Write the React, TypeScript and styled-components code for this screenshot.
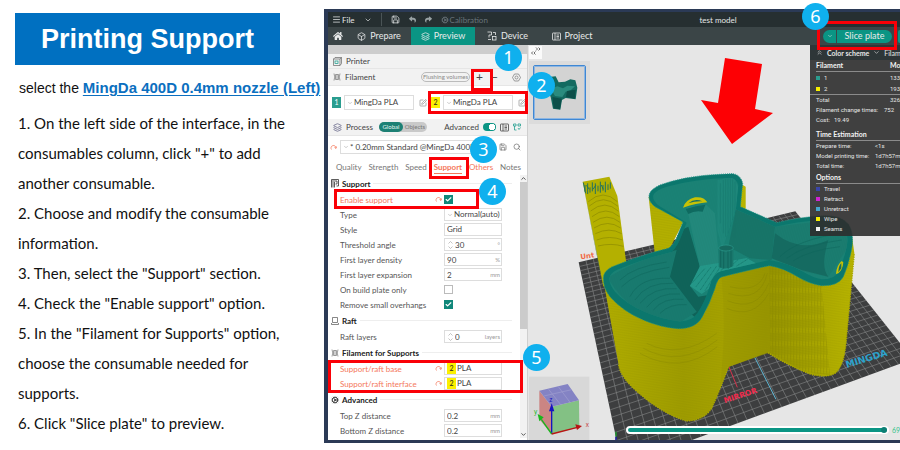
import React from "react";
import styled, { createGlobalStyle, css } from "styled-components";
import {
  Box,
  Check,
  ChevronDown,
  ChevronUp,
  ChevronsUp,
  Cog,
  Layers,
  Menu,
  Save,
  Search,
  SquarePen,
} from "lucide-react";
import { FaHome, FaReply, FaShare } from "react-icons/fa";

const teal = "#0a9584";
const orange = "#f4785c";
const ui = `Lato, Roboto, "Liberation Sans", sans-serif`;

const GlobalStyle = createGlobalStyle`
  * { box-sizing: border-box; }
  body { margin: 0; background: #fff; overflow: hidden; }
  button, input, select { font: inherit; color: inherit; margin: 0; padding: 0; border: 0; background: none; }
  svg { flex: none; }
`;

const Page = styled.main`
  display: flex;
  align-items: flex-start;
  min-height: 100vh;
`;

/* ---------- written guide ---------- */

const Guide = styled.section`
  flex: 0 0 36%;
  padding: 13px 0 0 18px;
  color: #111;
`;

const Banner = styled.h1`
  margin: 0 44px 8px -3px;
  background: #0070c1;
  color: #fff;
  font: bold 27px/52px "Liberation Sans", Arial, sans-serif;
  text-align: center;
  white-space: nowrap;
`;

const Lead = styled.p`
  margin: 0 0 5px 1px;
  font: 14px/30px "Liberation Sans", Arial, sans-serif;
  white-space: nowrap;
`;

const NozzleLink = styled.a`
  color: #0b6fc0;
  font-size: 15px;
  font-weight: bold;
  text-decoration: underline;
  text-underline-offset: 2px;
`;

const Step = styled.p`
  margin: 0;
  font: 15px/30px Lato, "Noto Sans", sans-serif;
  white-space: nowrap;
`;

/* ---------- application window ---------- */

const Window = styled.section`
  position: relative;
  flex: 1;
  min-width: 0;
  margin-top: 9px;
  border: 3px solid #2b3a56;
  border-left-width: 4px;
  border-right: 0;
  font: 8px/12px ${ui};
  color: #444;
`;

const TitleBar = styled.header`
  display: grid;
  grid-template-columns: 9fr auto 4fr;
  align-items: center;
  height: 15px;
  padding: 0 0 0 4px;
  background: #262f31;
  color: #e3e6e6;
`;

const TitleTools = styled.div`
  display: flex;
  align-items: center;
  gap: 9px;
`;

const ToolButton = styled.button<{ $muted?: boolean }>`
  display: flex;
  align-items: center;
  gap: 1px;
  color: ${(p) => (p.$muted ? "#69747a" : "inherit")};
`;

const Rule = styled.span`
  width: 1px;
  height: 13px;
  background: #4a5456;
`;

const NavBar = styled.nav`
  display: flex;
  align-items: center;
  height: 18px;
  background: #3b4547;
  color: #e8eaea;
`;

const NavTab = styled.button<{ $active?: boolean; $width: number }>`
  display: flex;
  align-items: center;
  justify-content: center;
  gap: 4px;
  width: ${(p) => p.$width}px;
  height: 18px;
  background: ${(p) => (p.$active ? teal : "transparent")};
  font-size: 9px;
`;

const SliceGroup = styled.div`
  display: flex;
  gap: 6px;
  margin-left: auto;
  overflow: hidden;
`;

const Pill = styled.div`
  display: flex;
  height: 13px;
  width: 69px;
  border-radius: 7px;
  background: ${teal};
`;

const PillPart = styled.button<{ $main?: boolean }>`
  display: flex;
  align-items: center;
  justify-content: center;
  flex: ${(p) => (p.$main ? "1" : "0 0 13px")};
  border-left: ${(p) => (p.$main ? "1px solid #3b4547" : "0")};
  font-size: 9px;
`;

const PillEdge = styled.div`
  width: 2px;
  height: 13px;
  border-radius: 2px 0 0 2px;
  background: ${teal};
`;

const Workspace = styled.div`
  display: flex;
  align-items: stretch;
`;

/* ---------- settings sidebar ---------- */

const Sidebar = styled.aside`
  flex: 0 0 200px;
  background: #fff;
  border-right: 1px solid #cfcfcf;
`;

const Strip = styled.div`
  height: 9px;
  background: #cdcdcd;
`;

const GroupHeader = styled.div<{ $tall?: boolean }>`
  display: flex;
  align-items: center;
  gap: 4px;
  height: ${(p) => (p.$tall ? 17 : 15)}px;
  padding: 0 6px 0 5px;
  background: #f2f2f2;
  border-bottom: 1px solid #e6e6e6;
`;

const Spacer = styled.span`
  flex: 1;
`;

const FlushButton = styled.button`
  height: 10px;
  width: 49px;
  border: 1px solid #bbb;
  border-radius: 5px;
  color: #8a8a8a;
  font-size: 6px;
  line-height: 8px;
  white-space: nowrap;
`;

const GlyphButton = styled.button<{ $gapAfter?: boolean }>`
  display: flex;
  flex: 0 0 11px;
  justify-content: center;
  margin-right: ${(p) => (p.$gapAfter ? 8 : 0)}px;
  font-size: 12px;
`;

const FilamentList = styled.div`
  display: grid;
  grid-template-columns: 1fr 1fr;
  column-gap: 3px;
  padding: 9px 0 9px 4px;
`;

const FilamentItem = styled.div`
  display: flex;
  align-items: center;
  gap: 3px;
`;

const Swatch = styled.span<{ $color: string; $dark?: boolean }>`
  flex: 0 0 9px;
  height: 11px;
  background: ${(p) => p.$color};
  color: ${(p) => (p.$dark ? "#222" : "#fff")};
  font-size: 7px;
  line-height: 11px;
  text-align: center;
`;

const Field = styled.div<{ $height?: number }>`
  display: flex;
  align-items: center;
  flex: 1;
  min-width: 0;
  gap: 1px;
  height: ${(p) => p.$height ?? 13}px;
  padding: 0 1px 0 2px;
  border: 1px solid #ddd;
  background: #fff;
`;

const Select = styled.select`
  appearance: none;
  flex: 1;
  min-width: 0;
  height: 11px;
  line-height: 11px;
`;

const TextBox = styled.input`
  flex: 1;
  width: 20px;
  min-width: 0;
  height: 11px;
`;

const Unit = styled.span`
  color: #999;
  font-size: 6px;
`;

const ScopeSwitch = styled.div`
  display: flex;
  margin-left: 2px;
  height: 10px;
  border-radius: 5px;
  background: #c9c9c9;
`;

const ScopeButton = styled.button<{ $active?: boolean }>`
  width: 24px;
  border-radius: 5px;
  font-size: 6px;
  line-height: 10px;
  background: ${(p) => (p.$active ? "#1d8074" : "transparent")};
  color: ${(p) => (p.$active ? "#e5f5f2" : "#777")};
`;

const Toggle = styled.input`
  appearance: none;
  width: 13px;
  height: 8px;
  border-radius: 4px;
  background: radial-gradient(circle at 9px 4px, #fff 3px, ${teal} 3px);
`;

const PresetRow = styled.div`
  display: flex;
  align-items: center;
  gap: 3px;
  padding: 4px 5px 3px 2px;
`;

const Tabs = styled.div`
  display: flex;
  justify-content: space-between;
  align-items: flex-end;
  height: 18px;
  padding: 0 6px 1px 8px;
`;

const Tab = styled.button<{ $state?: "active" | "changed" }>`
  height: 14px;
  border-bottom: 1px solid transparent;
  color: #777;
  ${(p) => p.$state && css`color: ${orange};`}
  ${(p) =>
    p.$state === "active" &&
    css`
      font-weight: bold;
      border-color: ${orange};
    `}
`;

const Settings = styled.div`
  display: flex;
  padding-bottom: 2px;
`;

const SettingsList = styled.div`
  flex: 1;
  min-width: 0;
`;

const ScrollTrack = styled.div`
  display: flex;
  flex-direction: column;
  align-items: center;
  flex: 0 0 7px;
  background: #f2f2f2;
`;

const ScrollThumb = styled.div`
  flex: 0 0 56%;
  width: 7px;
  background: #cbcbcb;
`;

const SectionTitle = styled.h2`
  display: flex;
  align-items: center;
  gap: 3px;
  height: 17px;
  margin: 0;
  padding: 0 8px 0 3px;
  color: #222;
  font-size: 8px;
  &::after {
    content: "";
    flex: 1;
    height: 1px;
    background: #eee;
  }
`;

const Row = styled.div<{ $changed?: boolean }>`
  display: grid;
  grid-template-columns: 95px 9px 58px;
  align-items: center;
  height: 15px;
  padding-left: 12px;
  white-space: nowrap;
  color: ${(p) => (p.$changed ? orange : "#555")};
`;

const Control = styled.div`
  display: flex;
  color: #444;
`;

const Tick = styled.span`
  position: relative;
  display: flex;
  width: 9px;
  height: 9px;
  color: #fff;
  svg {
    position: absolute;
    inset: 1px;
    pointer-events: none;
  }
`;

const TickInput = styled.input`
  appearance: none;
  width: 9px;
  height: 9px;
  border: 1px solid #bbb;
  &:checked {
    background: #10877a;
    border-color: #10877a;
  }
`;

/* ---------- preview viewport ---------- */

const Viewport = styled.div`
  position: relative;
  flex: 1;
  min-width: 0;
  overflow: hidden;
  background: #e6e6e6;
`;

const Scene = styled.svg`
  position: absolute;
  inset: 0;
  width: 100%;
  height: 100%;
`;

const CollapseButton = styled.button`
  position: absolute;
  left: 1px;
  top: 1px;
  width: 13px;
  height: 13px;
  background: #fafafa;
  color: #444;
`;

const PlateThumb = styled.div`
  position: absolute;
  left: 1px;
  top: 16px;
  padding: 4px;
  background: #dcdcdc;
`;

const PlateButton = styled.button`
  display: block;
  width: 53px;
  height: 55px;
  border: 1px solid #3f87d3;
  border-radius: 2px;
  outline: 1px solid #8db6e2;
  outline-offset: -2px;
  background: #d3d3d3;
`;

const Stats = styled.section`
  position: absolute;
  top: 0;
  right: 0;
  width: 90px;
  height: 191px;
  overflow: hidden;
  background: rgba(46, 46, 46, 0.9);
  color: #e6e6e6;
  font-size: 6px;
  line-height: 10px;
  white-space: nowrap;
`;

const StatsTabs = styled.div`
  display: flex;
  align-items: center;
  height: 15px;
  gap: 4px;
  padding-left: 6px;
  background: #2e3638;
  font-size: 7px;
`;

const StatsHead = styled.h3`
  display: grid;
  grid-template-columns: 74px auto;
  height: 12px;
  margin: 0 0 0 6px;
  border-bottom: 1px solid #8b8b8b;
  color: #f2f2f2;
  font-size: 7px;
  line-height: 10px;
`;

const StatsBlock = styled.div<{ $ruled?: boolean; $gap?: number }>`
  padding: 0 0 0 6px;
  margin-bottom: ${(p) => p.$gap ?? 0}px;
  font-family: Roboto, sans-serif;
  ${(p) => p.$ruled && css`border-bottom: 1px solid #8b8b8b;`}
`;

const StatsLine = styled.div<{ $cols?: string; $height?: number }>`
  display: grid;
  grid-template-columns: ${(p) => p.$cols ?? "8px 66px auto"};
  align-items: center;
  height: ${(p) => p.$height ?? 10}px;
`;

const Dot = styled.span<{ $color: string }>`
  width: 4px;
  height: 4px;
  background: ${(p) => p.$color};
`;

const LayerSlider = styled.div`
  position: absolute;
  left: 98px;
  right: 0;
  bottom: 5px;
  display: flex;
  align-items: center;
  gap: 3px;
  height: 10px;
  color: #34c38a;
  font-size: 7px;
`;

const Range = styled.input`
  appearance: none;
  flex: 1;
  min-width: 0;
  height: 8px;
  border: 2px solid #fff;
  border-radius: 4px;
  background: ${teal};
  &::-webkit-slider-thumb {
    appearance: none;
    width: 6px;
    height: 6px;
    border-radius: 50%;
    background: #0b7f74;
  }
`;

/* ---------- callouts drawn over the window ---------- */

const Frame = styled.div<{ $x: number; $y: number; $w: number; $h: number; $fromRight?: boolean }>`
  position: absolute;
  ${(p) => (p.$fromRight ? "right" : "left")}: ${(p) => p.$x}px;
  top: ${(p) => p.$y}px;
  width: ${(p) => p.$w}px;
  height: ${(p) => p.$h}px;
  border: 3px solid #fa0007;
  pointer-events: none;
`;

const Bubble = styled.span<{ $x: number; $y: number; $fromRight?: boolean }>`
  position: absolute;
  ${(p) => (p.$fromRight ? "right" : "left")}: ${(p) => p.$x}px;
  top: ${(p) => p.$y}px;
  width: 27px;
  height: 27px;
  border-radius: 50%;
  background: #0fb0ee;
  color: #fff;
  font: 18px/26px "Noto Sans", sans-serif;
  text-align: center;
`;

/* ---------- drawings ---------- */

type Pt = [number, number];

const corners: Pt[] = [
  [176, 397],
  [826, 244],
  [1178, 687],
  [306, 1007],
];

function project(u: number, v: number): Pt {
  const [[x0, y0], [x1, y1], [x2, y2], [x3, y3]] = corners;
  const dx1 = x1 - x2, dx2 = x3 - x2, sx = x0 - x1 + x2 - x3;
  const dy1 = y1 - y2, dy2 = y3 - y2, sy = y0 - y1 + y2 - y3;
  const det = dx1 * dy2 - dx2 * dy1;
  const g = (sx * dy2 - dx2 * sy) / det;
  const h = (dx1 * sy - sx * dy1) / det;
  const w = g * u + h * v + 1;
  return [
    ((x1 - x0 + g * x1) * u + (x3 - x0 + h * x3) * v + x0) / w,
    ((y1 - y0 + g * y1) * u + (y3 - y0 + h * y3) * v + y0) / w,
  ];
}

function gridPath() {
  const cells = 34;
  let d = "";
  for (let i = 1; i < cells; i++) {
    const t = i / cells;
    const lines: [Pt, Pt][] = [
      [project(t, 0), project(t, 1)],
      [project(0, t), project(1, t)],
    ];
    lines.forEach(([a, b]) => {
      d += `M${a.map((n) => n.toFixed(1)).join(" ")}L${b.map((n) => n.toFixed(1)).join(" ")}`;
    });
  }
  return d;
}

const wall =
  "M250 450L296 705Q300 735 335 770Q420 850 500 873Q550 872 575 835Q600 780 625 711L744 668Q800 705 870 732Q920 746 948 728Q972 705 978 640L1003 370L996 320L750 380L590 430Z";

const rim =
  "M250 445Q250 424 275 411Q360 376 445 355Q462 345 472 318L489 276L405 230Q383 213 388 193Q392 178 420 165Q500 137 600 133L638 131Q662 134 668 160L661 230L770 278Q830 263 900 258Q960 253 985 282Q1002 310 996 350Q988 400 970 440Q955 468 905 467Q870 463 830 439Q790 414 748 407Q690 420 605 441Q592 445 585 475Q570 520 547 560Q528 596 475 596Q420 592 370 570Q310 545 270 500Q250 475 250 445Z";

const cavity =
  "M268 445Q270 430 290 420Q370 386 455 366Q472 350 484 318L500 278L418 228Q396 212 400 195Q408 180 440 170Q520 147 630 143Q650 145 655 165L648 238L765 290Q840 274 900 270Q950 266 970 290Q988 315 980 350Q972 392 955 425Q945 448 905 448Q880 444 845 423Q800 398 748 390Q690 403 605 423Q580 428 570 465Q556 515 532 550Q515 576 475 574Q420 566 375 546Q315 520 285 485Q268 465 268 445Z";

function ModelScene() {
  return (
    <Scene viewBox="528 45 372 395" preserveAspectRatio="xMinYMin slice" aria-hidden="true">
      <defs>
        <pattern id="weave" width="6" height="5" patternUnits="userSpaceOnUse" patternTransform="rotate(-6)">
          <path d="M0 1H6M1 3H5" stroke="#7d7b00" strokeWidth="1.2" opacity="0.45" />
        </pattern>
        <pattern id="ribs" width="9" height="40" patternUnits="userSpaceOnUse">
          <path d="M2 0V40M6 8V34" stroke="#6f6f00" strokeWidth="1.5" opacity="0.5" />
        </pattern>
        <pattern id="threads" width="7" height="4" patternUnits="userSpaceOnUse" patternTransform="rotate(-16)">
          <path d="M0 2H6" stroke="#0c6a60" strokeWidth="1" opacity="0.4" />
        </pattern>
        <linearGradient id="wall" x1="0" x2="1" y1="0" y2="0">
          <stop offset="0" stopColor="#b5b100" />
          <stop offset="0.32" stopColor="#a19e00" />
          <stop offset="0.48" stopColor="#a9a500" />
          <stop offset="0.65" stopColor="#9c9900" />
          <stop offset="1" stopColor="#bdb900" />
        </linearGradient>
        <clipPath id="inside"><path d={cavity} /></clipPath>
      </defs>
      <g transform="translate(520 130) scale(0.33333)">
        <polygon points={corners.map((c) => c.join(",")).join(" ")} fill="#3d3e3f" />
        <path d={gridPath()} stroke="#8b8c8c" strokeWidth="1.7" fill="none" />
        <path d="M625 706L652 772" stroke="#d5324c" strokeWidth="3" />
        <path d="M704 682L768 808" stroke="#5db5d2" strokeWidth="3" />
        <text x="614" y="820" transform="rotate(-18 614 820)" fill="#f02a4c" fontFamily="DejaVu Sans" fontWeight="bold" fontSize="23">MIRROR</text>
        <text x="980" y="714" transform="rotate(-17 980 714)" fill="#2ba2cd" fontFamily="DejaVu Sans" fontWeight="bold" fontSize="28">MINGDA</text>
        <text x="182" y="388" transform="rotate(-8 182 388)" fill="#f16a45" fontFamily="DejaVu Sans" fontWeight="bold" fontSize="21">Unt</text>

        <path d="M188 155L268 140L292 198L319 400L250 470Z" fill="#b4b000" />
        <path d="M188 155L250 470L235 400Z" fill="#4f7b50" />
        <path d="M205 215Q250 175 292 215M208 228Q250 190 294 229M212 243Q255 207 296 244M216 260Q258 226 298 260M219 277Q262 246 300 277M222 294Q264 267 302 294M226 311Q268 290 305 311M230 330Q268 315 308 330M234 348Q274 338 310 349" stroke="#8b8900" strokeWidth="2" fill="none" />
        <path d="M195 165V185M203 160V192M210 172V188M217 157V184M226 160V192M234 167V184M241 155V188M249 165V182M256 155V187M264 163V180M271 157V176M190 158L197 190M199 166L208 178M219 178L228 165M244 165L250 178" stroke="#24725f" strokeWidth="3" />

        <path d="M386 200L404 367L450 354L491 274L440 225Z" fill="#b8b400" />
        <path d="M386 200L404 367L450 354L491 274L440 225Z" fill="url(#weave)" />
        <path d="M660 160L677 170V238L658 240Z" fill="#b8b400" />

        <path d={wall} fill="url(#wall)" />
        <path d={wall} fill="url(#weave)" />
        <path d="M748 407Q790 414 830 439Q870 463 905 467L930 735Q880 735 840 718L750 668Z" fill="url(#ribs)" />
        <path d="M748 407L750 668L625 711L600 770Q620 600 605 441Z" fill="#969300" opacity="0.35" />
        <path d="M630 470Q715 490 735 430M625 490Q720 520 742 430M622 512Q710 548 746 460M620 535Q700 570 746 490M380 640Q480 690 590 610M370 655Q480 715 592 630M360 670Q480 738 592 650" stroke="#7f7d00" strokeWidth="1.5" fill="none" opacity="0.6" />
        <path d="M296 705Q300 735 335 770Q420 850 500 873Q550 872 575 835Q600 780 625 711M744 668Q800 705 870 732Q920 746 948 728Q972 705 978 640L1003 370" fill="none" stroke="#aaa700" strokeWidth="4" strokeDasharray="4 3" />

        <path d={rim} fill="#0b776d" />
        <path d={rim} fill="none" stroke="#1a9285" strokeWidth="3" strokeDasharray="3 3" />
        <path d={cavity} fill="#1a8376" />
        <g clipPath="url(#inside)">
          <path d="M484 300L505 290L540 412L510 468L535 500L565 495L535 570L440 490L455 366Z" fill="#0f6258" />
          <path d="M268 440Q360 385 470 360L450 440L530 545L475 580Q330 560 268 450Z" fill="#187b6f" />
          <path d="M500 232L560 225L585 250L598 400L540 412Z" fill="#238a7d" />
          <path d="M592 150L640 140L655 170L648 238L606 360L592 300Z" fill="#1f897c" />
          <path d="M648 238L765 290L755 390L690 385L625 350Z" fill="#177568" />
          <path d="M765 290L980 265L985 350L925 440L845 423L755 385Z" fill="#1b7d70" />
          <path d="M765 310Q840 370 925 330Q900 410 925 440L845 420L755 385Z" fill="#156b61" />
          <path d="M510 468L540 408L600 398L680 384L712 402L605 425L575 470L545 492Z" fill="#259a8b" />
          <path d={cavity} fill="url(#threads)" />
          <path d="M330 500Q360 440 450 445M345 510Q380 455 460 460M360 520Q400 470 470 476M380 532Q415 486 480 492M400 540Q430 502 490 508M420 550Q450 520 500 524M300 450Q340 410 440 396M305 470Q350 425 448 412M780 380Q830 330 960 310M800 385Q850 345 965 330M820 392Q870 360 960 350" stroke="#0f655b" strokeWidth="1.5" fill="none" />
          <path d="M610 150V310M617 147V320M624 145V310M631 144V290M638 146V270M645 155V250M601 160V280" stroke="#10695f" strokeWidth="1.3" opacity="0.65" />
          <path d="M515 460L555 415M528 470L573 411M541 480L590 408M555 482L605 404M575 460L620 400M625 415L655 388M650 408L682 388" stroke="#0e695f" strokeWidth="2" strokeDasharray="3 2" />
        </g>
        <path d="M596 356V411Q618 422 640 408V352" fill="#19776c" />
        <ellipse cx="618" cy="354" rx="22" ry="9" fill="#16695f" stroke="#2b9a8d" strokeWidth="2" />
        <path d="M602 362V412M611 365V416M624 364V415M633 361V411" stroke="#0d5d54" strokeWidth="2" />
        <path d="M489 233Q497 209 525 202Q552 199 562 217Q530 220 489 233Z" fill="#c8c205" />
        <path d="M505 220Q524 204 547 214Q524 213 505 220Z" fill="#186e63" />
        <path d="M497 237Q528 226 556 224L548 245Q525 240 505 252Z" fill="#0f6a60" />
        <path d="M948 432Q950 405 965 393L970 397Q968 420 955 430Z" fill="#c8c205" />
        <path d="M955 427Q955 408 964 399V415Z" fill="#176b60" />

        <rect x="27" y="740" width="181" height="190" fill="#d8d8d8" />
        <path d="M58 782L95 830V912L58 868Z" fill="#cb8583" />
        <path d="M95 830L177 811L178 892L95 912Z" fill="#83c184" />
        <path d="M58 782L143 762L177 811L95 830Z" fill="#8483c4" />
        <path d="M72 798L155 779M86 778L122 824M115 770L150 817" stroke="#a09fd0" strokeWidth="2" />
        <path d="M95 912V838" stroke="#1714bf" strokeWidth="4" />
        <path d="M95 820L87 844H103Z" fill="#1714bf" />
        <path d="M95 912L64 868" stroke="#17b71c" strokeWidth="4" />
        <path d="M53 852L71 862L58 874Z" fill="#17b71c" />
        <path d="M95 912L172 892" stroke="#b91414" strokeWidth="4" />
        <path d="M186 888L166 883L171 900Z" fill="#b91414" />
        <g fontFamily="Liberation Sans" fontSize="19">
          <text x="88" y="815" fill="#1714bf">z</text>
          <text x="42" y="853" fill="#17b71c">y</text>
          <text x="197" y="890" fill="#c63b3b">x</text>
        </g>
        <path d="M288 905V920" stroke="#18a02c" strokeWidth="4" />
        <path d="M288 920V932" stroke="#1d1d9a" strokeWidth="5" />
      </g>
      <polygon points="725,58 762,64 755,109 773,113 732,144 701,100 718,103" fill="#fd0004" />
    </Scene>
  );
}

function PlateModel() {
  return (
    <svg width="51" height="53" viewBox="25 197 153 159" aria-hidden="true">
      <path d="M66 240L76 229L90 228L99 246L118 244L134 237L149 240L155 262L150 297L120 293L109 299L104 328L82 325L75 290L66 270Z" fill="#136a60" />
      <path d="M75 265L95 258L112 264L125 256L148 258L135 270L120 274L110 290L88 287Z" fill="#2a8b7e" />
      <path d="M80 290L108 295L103 327L84 324ZM124 272L150 268L148 295L121 290Z" fill="#0c4f49" />
    </svg>
  );
}

function PlanIcon({ size = 9 }: { size?: number }) {
  return (
    <svg width={size} height={size} viewBox="0 0 18 18" fill="none" stroke="currentColor" strokeWidth="1.6" aria-hidden="true">
      <rect x="1" y="2" width="16" height="14" rx="1" />
      <path d="M6 2V16M9 6H14M9 9H14M9 12H14" />
    </svg>
  );
}

function DeviceIcon() {
  return (
    <svg width="10" height="10" viewBox="0 0 20 20" fill="none" stroke="currentColor" strokeWidth="1.6" aria-hidden="true">
      <path d="M1 2H9V8H4V13M2 17H8M12 3H17V8" />
      <rect x="11" y="11" width="7" height="7" />
    </svg>
  );
}

function SpoolIcon() {
  return (
    <svg width="8" height="8" viewBox="0 0 16 16" fill="none" stroke="#777" strokeWidth="1.4" aria-hidden="true">
      <path d="M2 1Q5 8 2 15M14 1Q11 8 14 15M5 3H11V13H5ZM8 3V13" />
    </svg>
  );
}

function PrinterIcon() {
  return (
    <svg width="9" height="9" viewBox="0 0 18 18" fill="none" stroke="#666" strokeWidth="1.4" aria-hidden="true">
      <path d="M1 4L4 1H17V13L14 17H1ZM1 4H14V17M14 4L17 1" />
      <rect x="4" y="8" width="6" height="5" stroke={teal} />
    </svg>
  );
}

function NutIcon() {
  return (
    <svg width="9" height="9" viewBox="0 0 18 18" fill="none" stroke="#777" strokeWidth="1.4" aria-hidden="true">
      <path d="M5 2H13L17 9L13 16H5L1 9Z" />
      <circle cx="9" cy="9" r="3" />
    </svg>
  );
}

function SupportIcon() {
  return (
    <svg width="8" height="9" viewBox="0 0 16 18" fill="none" stroke="#333" strokeWidth="1.6" aria-hidden="true">
      <path d="M1 1H15V14H11M1 1V17M4 6V17M7 6V17M1 4H12V10H9" />
    </svg>
  );
}

function RaftIcon() {
  return (
    <svg width="8" height="8" viewBox="0 0 16 16" fill="none" stroke="#555" strokeWidth="1.4" aria-hidden="true">
      <path d="M3 1H13V11H3ZM1 12V15H15V12" />
    </svg>
  );
}

function TreeIcon() {
  return (
    <svg width="8" height="8" viewBox="0 0 16 16" fill="none" stroke={teal} strokeWidth="1.4" aria-hidden="true">
      <path d="M1 2H6V6H1ZM10 2H15V6H10ZM3 6V14H7M10 10L12 13L15 9" />
    </svg>
  );
}

function Reset() {
  return (
    <svg width="7" height="7" viewBox="0 0 14 14" fill="none" stroke={orange} strokeWidth="1.5" aria-hidden="true">
      <path d="M3 11A5 5 0 1 1 12 8M9 7L12 9L13 5" />
    </svg>
  );
}

function Spin() {
  return (
    <svg width="7" height="10" viewBox="0 0 12 20" fill="none" stroke="#aaa" strokeWidth="1.4" aria-hidden="true">
      <path d="M2 7L6 3L10 7M2 13L6 17L10 13" />
    </svg>
  );
}

/* ---------- sidebar rows ---------- */

function ChoiceRow({ label, value, arrow, swatch }: { label: string; value: string; arrow?: boolean; swatch?: string }) {
  const id = label.replace(/\W/g, "-");
  return (
    <Row $changed={!!swatch}>
      <label htmlFor={id}>{label}</label>
      {swatch ? <Reset /> : <span />}
      <Control>
        <Field>
          {arrow && <ChevronDown size={6} color="#999" />}
          {swatch && <Swatch $color="#fbf000" $dark>{swatch}</Swatch>}
          <Select id={id} defaultValue={value}>
            <option>{value}</option>
          </Select>
        </Field>
      </Control>
    </Row>
  );
}

function NumberRow({ label, value, unit, spin }: { label: string; value: string; unit: string; spin?: boolean }) {
  const id = label.replace(/\W/g, "-");
  return (
    <Row>
      <label htmlFor={id}>{label}</label>
      <span />
      <Control>
        <Field>
          {spin && <Spin />}
          <TextBox id={id} defaultValue={value} />
          <Unit>{unit}</Unit>
        </Field>
      </Control>
    </Row>
  );
}

function TickRow({ label, checked, changed }: { label: string; checked?: boolean; changed?: boolean }) {
  const id = label.replace(/\W/g, "-");
  return (
    <Row $changed={changed}>
      <label htmlFor={id}>{label}</label>
      {changed ? <Reset /> : <span />}
      <Tick>
        <TickInput id={id} type="checkbox" defaultChecked={checked} />
        {checked && <Check size={7} strokeWidth={4} />}
      </Tick>
    </Row>
  );
}

function Filament({ no, color, dark }: { no: string; color: string; dark?: boolean }) {
  return (
    <FilamentItem>
      <Swatch $color={color} $dark={dark}>{no}</Swatch>
      <Field $height={15}>
        <ChevronDown size={6} color="#999" />
        <Select aria-label={`Filament ${no}`} defaultValue="MingDa PLA">
          <option>MingDa PLA</option>
        </Select>
      </Field>
      <GlyphButton aria-label={`Edit filament ${no}`}>
        <SquarePen size={8} color="#888" />
      </GlyphButton>
    </FilamentItem>
  );
}

function SettingsPanel() {
  return (
    <Sidebar>
      <Strip />
      <GroupHeader>
        <PrinterIcon />
        Printer
      </GroupHeader>
      <GroupHeader $tall>
        <SpoolIcon />
        Filament
        <Spacer />
        <FlushButton>Flushing volumes</FlushButton>
        <GlyphButton aria-label="Add filament">+</GlyphButton>
        <GlyphButton aria-label="Remove filament" $gapAfter>−</GlyphButton>
        <NutIcon />
      </GroupHeader>
      <FilamentList>
        <Filament no="1" color="#2a9d8f" />
        <Filament no="2" color="#fbf000" dark />
      </FilamentList>
      <GroupHeader $tall>
        <Layers size={9} color="#668" />
        Process
        <ScopeSwitch>
          <ScopeButton $active>Global</ScopeButton>
          <ScopeButton>Objects</ScopeButton>
        </ScopeSwitch>
        <Spacer />
        <label htmlFor="advanced">Advanced</label>
        <Toggle id="advanced" type="checkbox" defaultChecked />
        <PlanIcon />
        <TreeIcon />
      </GroupHeader>
      <PresetRow>
        <Reset />
        <Field $height={14}>
          <ChevronDown size={6} color="#999" />
          <Select aria-label="Process preset" defaultValue="a">
            <option value="a">* 0.20mm Standard @MingDa 400D</option>
          </Select>
        </Field>
        <GlyphButton aria-label="Save preset"><Save size={8} color="#666" /></GlyphButton>
        <GlyphButton aria-label="Search settings"><Search size={8} color="#666" /></GlyphButton>
      </PresetRow>
      <Tabs>
        <Tab>Quality</Tab>
        <Tab>Strength</Tab>
        <Tab>Speed</Tab>
        <Tab $state="active">Support</Tab>
        <Tab $state="changed">Others</Tab>
        <Tab>Notes</Tab>
      </Tabs>
      <Settings>
        <SettingsList>
          <SectionTitle><SupportIcon />Support</SectionTitle>
          <TickRow label="Enable support" checked changed />
          <ChoiceRow label="Type" value="Normal(auto)" arrow />
          <ChoiceRow label="Style" value="Grid" />
          <NumberRow label="Threshold angle" value="30" unit="°" spin />
          <NumberRow label="First layer density" value="90" unit="%" />
          <NumberRow label="First layer expansion" value="2" unit="mm" />
          <TickRow label="On build plate only" />
          <TickRow label="Remove small overhangs" checked />
          <SectionTitle><RaftIcon />Raft</SectionTitle>
          <NumberRow label="Raft layers" value="0" unit="layers" spin />
          <SectionTitle><SpoolIcon />Filament for Supports</SectionTitle>
          <ChoiceRow label="Support/raft base" value="PLA" swatch="2" />
          <ChoiceRow label="Support/raft interface" value="PLA" swatch="2" />
          <SectionTitle><Cog size={8} />Advanced</SectionTitle>
          <NumberRow label="Top Z distance" value="0.2" unit="mm" />
          <NumberRow label="Bottom Z distance" value="0.2" unit="mm" />
        </SettingsList>
        <ScrollTrack>
          <ChevronUp size={7} strokeWidth={3} />
          <ScrollThumb />
          <Spacer />
          <ChevronDown size={7} strokeWidth={3} />
        </ScrollTrack>
      </Settings>
    </Sidebar>
  );
}

const options: [string, string][] = [
  ["Travel", "#3a45a8"],
  ["Retract", "#cf25d3"],
  ["Unretract", "#45a7cf"],
  ["Wipe", "#f8f000"],
  ["Seams", "#f2f2f2"],
];

function StatsPanel() {
  return (
    <Stats>
      <StatsTabs>
        <ChevronsUp size={7} />
        <b>Color scheme</b>
        <ChevronDown size={7} />
        <span>Filament</span>
      </StatsTabs>
      <StatsHead><span>Filament</span><span>Model</span></StatsHead>
      <StatsBlock $ruled>
        <StatsLine $height={11}><Dot $color="#2a9d8f" /><span>1</span><span>133.02</span></StatsLine>
        <StatsLine $height={11}><Dot $color="#f8f000" /><span>2</span><span>193.11</span></StatsLine>
      </StatsBlock>
      <StatsBlock $gap={4}>
        <StatsLine $cols="74px auto"><span>Total</span><span>326.13</span></StatsLine>
        <StatsLine $cols="68px auto"><span>Filament change times:</span><span>752</span></StatsLine>
        <StatsLine $cols="18px auto"><span>Cost:</span><span>19.49</span></StatsLine>
      </StatsBlock>
      <StatsHead>Time Estimation</StatsHead>
      <StatsBlock $gap={1}>
        <StatsLine $cols="59px auto"><span>Prepare time:</span><span>&lt;1s</span></StatsLine>
        <StatsLine $cols="59px auto"><span>Model printing time:</span><span>1d7h57m</span></StatsLine>
        <StatsLine $cols="59px auto"><span>Total time:</span><span>1d7h57m</span></StatsLine>
      </StatsBlock>
      <StatsHead>Options</StatsHead>
      <StatsBlock>
        {options.map(([name, color]) => (
          <StatsLine key={name} $height={10}><Dot $color={color} /><span>{name}</span></StatsLine>
        ))}
      </StatsBlock>
    </Stats>
  );
}

export default function App() {
  return (
    <Page>
      <GlobalStyle />
      <Guide>
        <Banner>Printing Support</Banner>
        <Lead>select the <NozzleLink href="#nozzle">MingDa 400D 0.4mm nozzle (Left)</NozzleLink></Lead>
        <Step>1. On the left side of the interface, in the<br />consumables column, click "+" to add<br />another consumable.</Step>
        <Step>2. Choose and modify the consumable<br />information.</Step>
        <Step>3. Then, select the "Support" section.</Step>
        <Step>4. Check the "Enable support" option.</Step>
        <Step>5. In the "Filament for Supports" option,<br />choose the consumable needed for<br />supports.</Step>
        <Step>6. Click "Slice plate" to preview.</Step>
      </Guide>
      <Window>
        <TitleBar>
          <TitleTools>
            <ToolButton><Menu size={9} />File</ToolButton>
            <ToolButton aria-label="File menu"><ChevronDown size={8} /></ToolButton>
            <Rule />
            <ToolButton aria-label="Save"><Save size={9} /></ToolButton>
            <ToolButton aria-label="Undo"><FaReply size={7} color="#99a2a4" /></ToolButton>
            <ToolButton aria-label="Redo"><FaShare size={7} color="#99a2a4" /></ToolButton>
            <ToolButton $muted><Cog size={8} />Calibration</ToolButton>
          </TitleTools>
          <span>test model</span>
        </TitleBar>
        <NavBar>
          <NavTab $width={19} aria-label="Home"><FaHome size={10} /></NavTab>
          <NavTab $width={64}><Box size={9} />Prepare</NavTab>
          <NavTab $width={64} $active><Layers size={9} />Preview</NavTab>
          <NavTab $width={65}><DeviceIcon />Device</NavTab>
          <NavTab $width={64}><PlanIcon />Project</NavTab>
          <SliceGroup>
            <Pill>
              <PillPart aria-label="Slice options"><ChevronDown size={6} /></PillPart>
              <PillPart $main>Slice plate</PillPart>
            </Pill>
            <PillEdge />
          </SliceGroup>
        </NavBar>
        <Workspace>
          <SettingsPanel />
          <Viewport>
            <ModelScene />
            <CollapseButton aria-label="Collapse sidebar">
              <svg width="11" height="11" viewBox="0 0 22 22" fill="none" stroke="currentColor" strokeWidth="1.6">
                <path d="M6 11L3 14L6 17M11 11L8 14L11 17M12 3L15 6L12 9M17 3L20 6L17 9" />
              </svg>
            </CollapseButton>
            <PlateThumb>
              <PlateButton aria-label="Plate 1"><PlateModel /></PlateButton>
            </PlateThumb>
            <StatsPanel />
            <LayerSlider>
              <Range type="range" aria-label="Layer" min={0} max={100} defaultValue={100} />
              <span>69</span>
            </LayerSlider>
          </Viewport>
        </Workspace>
        <Frame $x={143} $y={57} $w={22} $h={22} />
        <Frame $x={100} $y={79} $w={100} $h={23} />
        <Frame $x={101} $y={145} $w={40} $h={22} />
        <Frame $x={6} $y={177} $w={145} $h={20} />
        <Frame $x={0} $y={348} $w={195} $h={33} />
        <Frame $x={3} $y={9} $w={80} $h={29} $fromRight />
        <Bubble $x={167} $y={32}>1</Bubble>
        <Bubble $x={200} $y={60}>2</Bubble>
        <Bubble $x={142} $y={124}>3</Bubble>
        <Bubble $x={151} $y={166}>4</Bubble>
        <Bubble $x={195} $y={332}>5</Bubble>
        <Bubble $x={71} $y={-9} $fromRight>6</Bubble>
      </Window>
    </Page>
  );
}
